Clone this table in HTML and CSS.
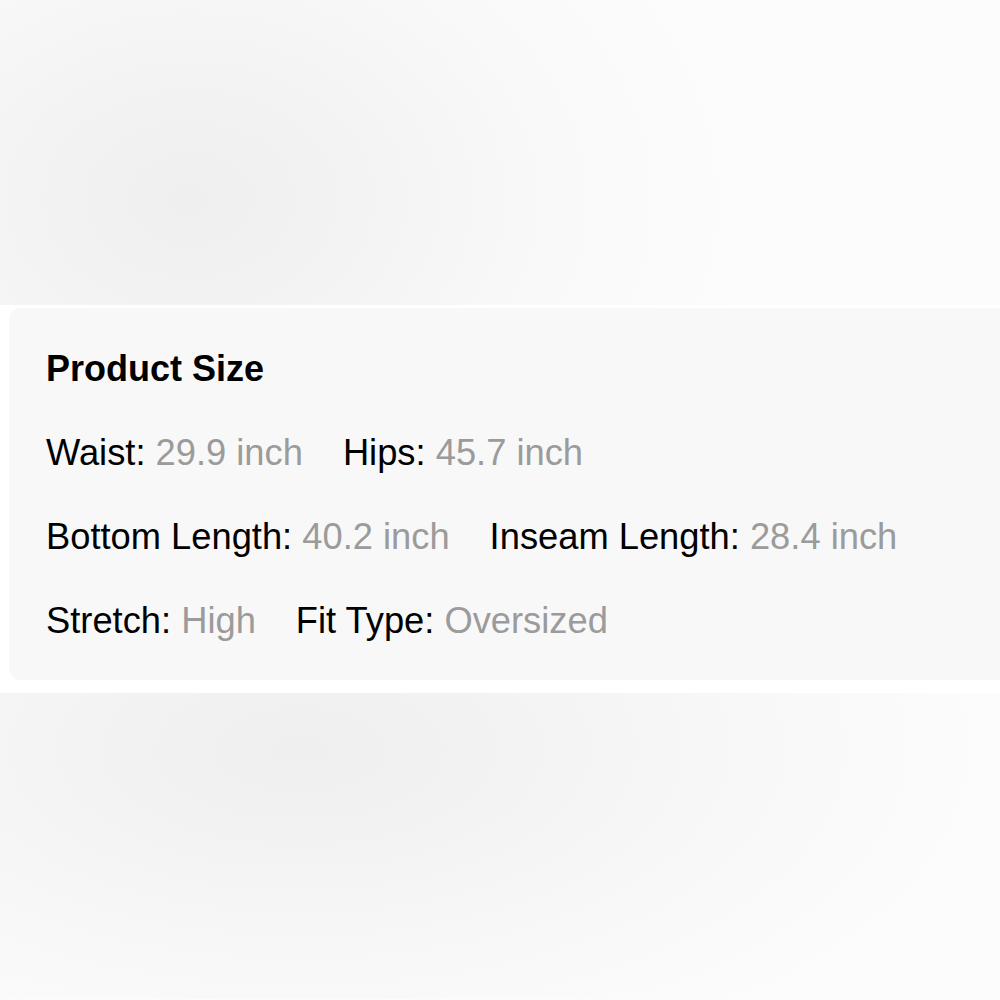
FILE: index.html
```html
<!DOCTYPE html>
<html>
<head>
<meta charset="utf-8">
<link rel="stylesheet" href="styles.css">
</head>
<body>
<div class="band band-top"></div>
<section class="card">
  <h2 class="title">Product Size</h2>
  <div class="row">
    <span class="item"><span class="label">Waist:</span> <span class="value">29.9 inch</span></span>
    <span class="item"><span class="label">Hips:</span> <span class="value">45.7 inch</span></span>
  </div>
  <div class="row">
    <span class="item"><span class="label">Bottom Length:</span> <span class="value">40.2 inch</span></span>
    <span class="item"><span class="label">Inseam Length:</span> <span class="value">28.4 inch</span></span>
  </div>
  <div class="row">
    <span class="item"><span class="label">Stretch:</span> <span class="value">High</span></span>
    <span class="item"><span class="label">Fit Type:</span> <span class="value">Oversized</span></span>
  </div>
</section>
<div class="band band-bottom"></div>
</body>
</html>
```
FILE: styles.css
```css
html, body {
  margin: 0;
  padding: 0;
  background: #ffffff;
  overflow: hidden;
}
body {
  width: 1000px;
  height: 1000px;
  font-family: "Liberation Sans", Arial, sans-serif;
}
.band {
  width: 100%;
}
.band-top {
  height: 305px;
  background: radial-gradient(ellipse 560px 420px at 190px 200px, #efefef 0%, #f3f3f3 30%, #f9f9f9 65%, #fcfcfc 100%);
}
.band-bottom {
  height: 307px;
  margin-top: 13px;
  background: radial-gradient(ellipse 700px 340px at 300px 750px, #efefef 0%, #f2f2f2 25%, #f8f8f8 65%, #fcfcfc 100%);
  background-position: 0 -694px;
  background-size: 1000px 1000px;
}
.card {
  margin: 3px -20px 0 9px;
  height: 372px;
  box-sizing: border-box;
  padding: 40px 37px 0 37px;
  background: #f8f8f8;
  border-radius: 12px;
}
.title {
  margin: 0;
  font-size: 36px;
  font-weight: bold;
  line-height: 42px;
  color: #000;
}
.row {
  display: flex;
  column-gap: 40px;
  margin-top: 42px;
  font-size: 36.3px;
  line-height: 42px;
}
.label {
  color: #000;
}
.value {
  color: #9b9b9b;
}
```
